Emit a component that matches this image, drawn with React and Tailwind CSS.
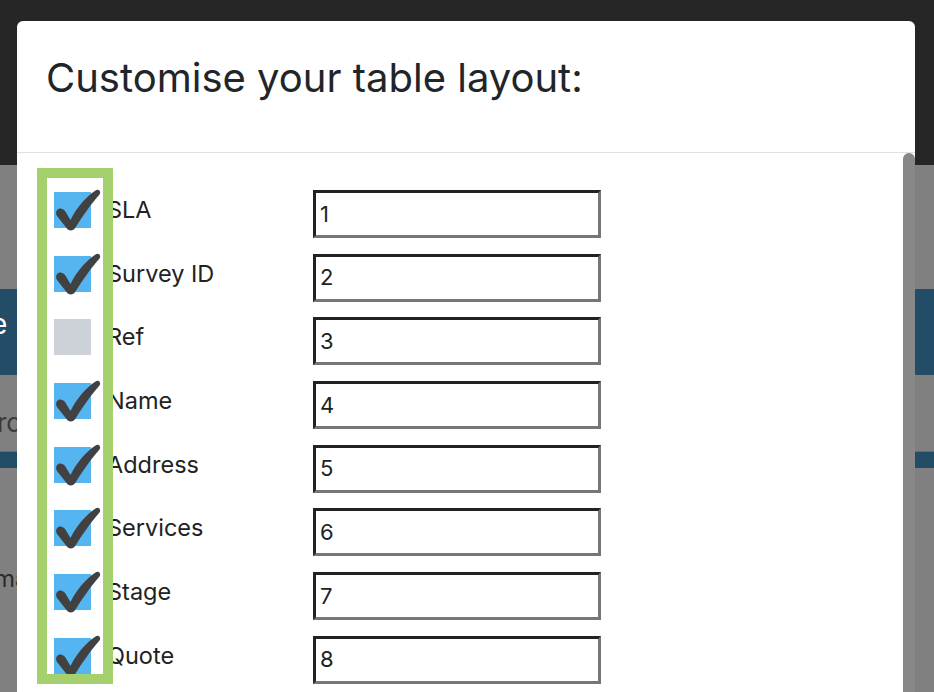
import React from 'react';

const fields = [
  { label: 'SLA', order: 1, on: true },
  { label: 'Survey ID', order: 2, on: true },
  { label: 'Ref', order: 3, on: false },
  { label: 'Name', order: 4, on: true },
  { label: 'Address', order: 5, on: true },
  { label: 'Services', order: 6, on: true },
  { label: 'Stage', order: 7, on: true },
  { label: 'Quote', order: 8, on: true },
];

const Tick = () => (
  <svg
    className="absolute left-0 top-[-6px] overflow-visible"
    width="50"
    height="46"
    viewBox="0 -6 50 46"
  >
    <path
      d="M3 18 C5 15.5 9 16 11 19 L16.5 28 C23 15 32 5 41.5 -1.5 C44.5 -3.5 47.5 -0.5 45.5 2.5 C37 12 28 25 21.5 35.5 C19.5 39 14.5 39.5 12.5 36 L3 24 C1.8 22 1.8 20 3 18 Z"
      fill="#414141"
    />
  </svg>
);

const FieldRow = ({ field }) => (
  <div className="flex items-start h-[63.7px]">
    <div className={`relative mt-[2px] w-[37px] h-[36px] shrink-0 ${field.on ? 'bg-[#55b5f1]' : 'bg-[#cdd1d8]'}`}>
      {field.on && <Tick />}
    </div>
    <span className="ml-[16px] mt-[6px] w-[206px] shrink-0 text-[23.5px] leading-[28px] text-[#222]">
      {field.label}
    </span>
    <div className="flex items-center w-[288px] h-[48px] pl-[4px] border-[3px] border-t-[#222] border-l-[#222] border-b-[#767676] border-r-[#767676] text-[22px] text-[#222]">
      {field.order}
    </div>
  </div>
);

export default function App() {
  return (
    <div className="relative w-[934px] h-[692px] overflow-hidden font-['Inter',sans-serif]">
      {/* page behind the modal, dimmed */}
      <div className="flex flex-col h-full bg-[#808080]">
        <div className="h-[165px] bg-[#262626] pt-[56px]">
          <span className="block ml-[-41px] text-[24px] text-[#8a8a8a]">Tas</span>
        </div>
        <div className="h-[124px]" />
        <div className="h-[86px] bg-[#234c66] pt-[14px]">
          <span className="block ml-[-9px] text-[28px] text-white">e</span>
        </div>
        <div className="h-[77px] border-b border-[#6b6b6b] pt-[33px]">
          <span className="block ml-[-3px] text-[26px] leading-[30px] text-[#3a3a3a]">ro</span>
        </div>
        <div className="h-[16px] bg-[#234c66]" />
        <div className="pt-[93px]">
          <span className="block ml-[-6px] text-[24px] text-[#2b2b2b]">ma</span>
        </div>
      </div>

      {/* modal */}
      <div className="absolute left-[17px] top-[21px] w-[898px] h-[700px] bg-white rounded-md flex flex-col">
        <div className="h-[132px] shrink-0 border-b border-[#dee2e6] pl-[29px] pt-[37px]">
          <h2 className="text-[40px] leading-[40px] text-[#212529]">Customise your table layout:</h2>
        </div>
        <div className="relative flex-1 overflow-hidden">
          <div className="flex flex-col pl-[37px] pt-[37px]">
            {fields.map((f) => (
              <FieldRow key={f.label} field={f} />
            ))}
          </div>
          {/* scrollbar thumb */}
          <div className="absolute right-0 top-0 w-[12px] h-[600px] bg-[#888] rounded-t-full" />
          {/* highlight around the checkbox column */}
          <div className="absolute left-[20px] top-[15px] w-[76px] h-[516px] border-[10px] border-[#a4d16d] pointer-events-none" />
        </div>
      </div>
    </div>
  );
}
